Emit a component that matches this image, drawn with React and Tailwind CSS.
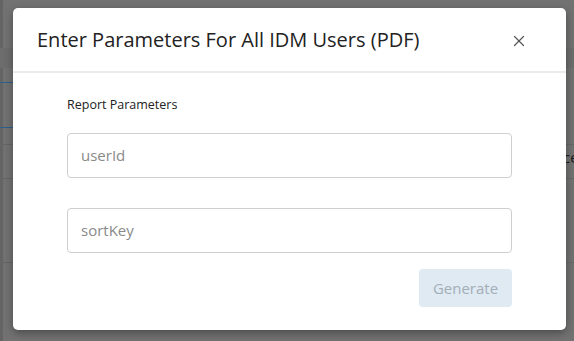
import { X } from "lucide-react";

const font = { fontFamily: '"Open Sans", "Noto Sans", sans-serif' };

export default function App() {
  return (
    <div
      className="relative w-[574px] h-[341px] overflow-hidden bg-[#727272]"
      style={font}
    >
      {/* faded page behind the overlay */}
      <div className="absolute left-0 top-0 h-full w-[3px] bg-[#646464]" />
      <div className="absolute left-0 top-[48px] h-[20px] w-full bg-[#6d6d6d]" />
      <div className="absolute left-0 top-[82px] h-px w-[14px] bg-[#2f5f8f]" />
      <div className="absolute left-0 top-[127px] h-px w-[14px] bg-[#2f5f8f]" />
      <div className="absolute left-0 top-[144px] h-px w-full bg-[#666666]" />
      <div className="absolute left-0 top-[178px] h-px w-full bg-[#666666]" />
      <div className="absolute left-0 top-[262px] h-px w-full bg-[#666666]" />
      <div className="absolute left-[563px] top-[146px] text-[15px] text-[#1a1a1a]">
        ce
      </div>

      <div className="relative ml-[13px] mt-[8px] w-[553px] h-[322px] bg-white rounded-[5px] shadow-[0_3px_8px_rgba(0,0,0,0.35)] flex flex-col">
        <div className="flex items-center justify-between h-[65px] pl-[24px] pr-[38px] border-b-2 border-[#ebebeb]">
          <h2 className="text-[20px] text-[#222]">
            Enter Parameters For All IDM Users (PDF)
          </h2>
          <X className="w-[18px] h-[18px] text-[#555] mt-[2px]" strokeWidth={1.6} />
        </div>

        <div className="flex flex-col px-[54px] pt-[23px]">
          <div className="text-[12.5px] text-[#222] font-medium">
            Report Parameters
          </div>
          <input
            placeholder="userId"
            className="mt-[18px] h-[45px] w-full rounded-[4px] border border-[#cfcfcf] px-[13px] text-[15px] text-[#333] placeholder:text-[#8a8a8a] outline-none"
          />
          <input
            placeholder="sortKey"
            className="mt-[30px] h-[45px] w-full rounded-[4px] border border-[#cfcfcf] px-[13px] text-[15px] text-[#333] placeholder:text-[#8a8a8a] outline-none"
          />
          <div className="flex justify-end mt-[16px]">
            <button className="h-[38px] w-[93px] rounded-[4px] bg-[#dfeaf2] text-[15px] text-[#a3aeb8]">
              Generate
            </button>
          </div>
        </div>
      </div>
    </div>
  );
}
